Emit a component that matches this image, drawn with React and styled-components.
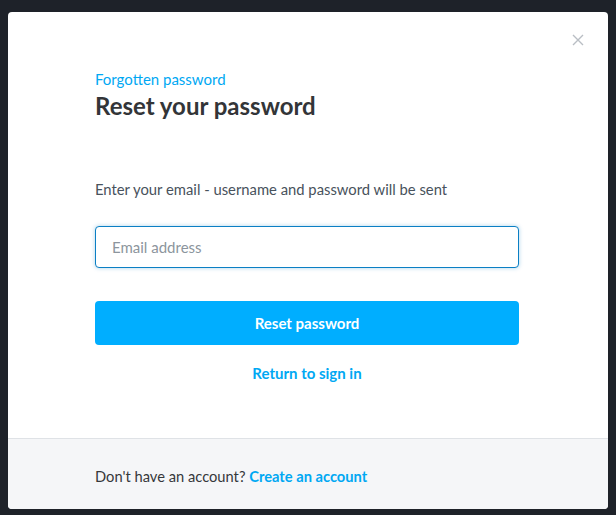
import React from 'react'
import styled, { createGlobalStyle } from 'styled-components'

const GlobalStyle = createGlobalStyle`
    html, body {
        margin: 0;
        padding: 0;
    }
    body {
        font-family: Lato, "Noto Sans", sans-serif;
        -webkit-font-smoothing: antialiased;
    }
`

const Backdrop = styled.div`
    width: 616px;
    height: 515px;
    background-color: #1e2229;
    padding: 12px 0 0 8px;
    box-sizing: border-box;
    overflow: hidden;
`

const Modal = styled.div`
    width: 600px;
    height: 497px;
    background-color: #ffffff;
    border-radius: 4px;
    overflow: hidden;
    display: flex;
    flex-direction: column;
    position: relative;
`

const Body = styled.div`
    height: 426px;
    box-sizing: border-box;
    padding: 57px 89px 0 87px;
    display: flex;
    flex-direction: column;
`

const Close = styled.button`
    position: absolute;
    top: 20px;
    right: 22px;
    width: 16px;
    height: 16px;
    padding: 0;
    border: none;
    background: none;
    cursor: pointer;
    display: flex;
    align-items: center;
    justify-content: center;
`

const Eyebrow = styled.div`
    font-size: 15px;
    line-height: 20px;
    color: #00a8f3;
`

const Title = styled.h1`
    margin: 2px 0 0;
    font-size: 24px;
    line-height: 30px;
    font-weight: 700;
    color: #333538;
`

const Hint = styled.p`
    margin: 58px 0 0;
    font-size: 14.8px;
    line-height: 20px;
    color: #48525c;
`

const Input = styled.input`
    margin-top: 27px;
    height: 42px;
    box-sizing: border-box;
    padding: 0 16px;
    border: 1px solid #0b7fc4;
    border-radius: 4px;
    box-shadow: 0 0 4px rgba(11, 127, 196, 0.35);
    font-family: inherit;
    font-size: 15px;
    color: #333;
    outline: none;
    &::placeholder {
        color: #8c959d;
    }
`

const Primary = styled.button`
    margin-top: 33px;
    height: 44px;
    border: none;
    border-radius: 4px;
    background-color: #00aeff;
    color: #ffffff;
    font-family: inherit;
    font-size: 15px;
    font-weight: 700;
    cursor: pointer;
`

const Link = styled.a`
    color: #00a8f3;
    font-weight: 700;
    text-decoration: none;
    cursor: pointer;
`

const Return = styled(Link)`
    margin-top: 18px;
    align-self: center;
    font-size: 15px;
    line-height: 20px;
`

const Footer = styled.div`
    flex: 1;
    border-top: 1px solid #dfe2e6;
    background-color: #f5f6f8;
    padding: 27px 87px 0;
    font-size: 14.7px;
    line-height: 20px;
    color: #35383b;
`

const App = () => {
    return (
        <>
            <GlobalStyle />
            <Backdrop>
                <Modal>
                    <Close aria-label="Close">
                        <svg width="12" height="12" viewBox="0 0 12 12">
                            <path d="M1 1L11 11M11 1L1 11" stroke="#b9bec4" strokeWidth="1.4" />
                        </svg>
                    </Close>
                    <Body>
                        <Eyebrow>Forgotten password</Eyebrow>
                        <Title>Reset your password</Title>
                        <Hint>Enter your email - username and password will be sent</Hint>
                        <Input placeholder="Email address" />
                        <Primary>Reset password</Primary>
                        <Return>Return to sign in</Return>
                    </Body>
                    <Footer>
                        Don't have an account? <Link>Create an account</Link>
                    </Footer>
                </Modal>
            </Backdrop>
        </>
    )
}

export default App
